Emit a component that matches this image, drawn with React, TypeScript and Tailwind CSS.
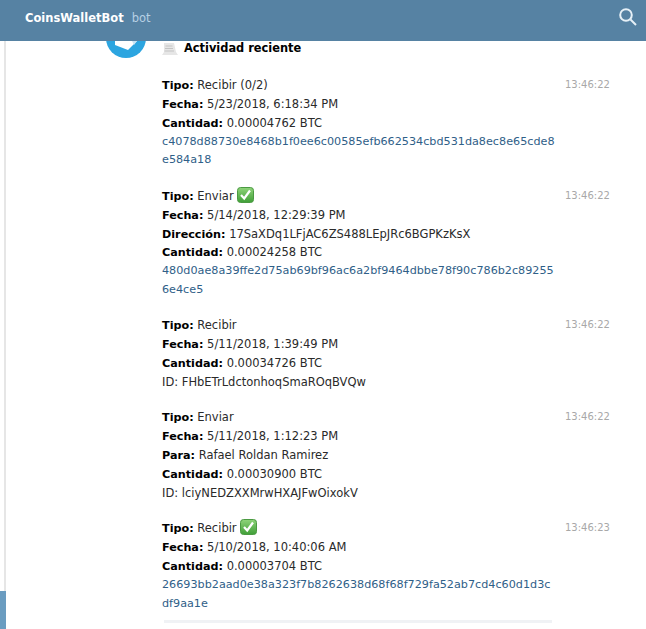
import React from "react";

const font = { fontFamily: '"DejaVu Sans", sans-serif' };

function Check() {
  return (
    <svg width="17" height="16" viewBox="0 0 17 16" className="ml-[3px] inline-block align-[-3px]">
      <defs>
        <linearGradient id="g" x1="0" y1="0" x2="0" y2="1">
          <stop offset="0" stopColor="#8fd47a" />
          <stop offset="1" stopColor="#3f9e37" />
        </linearGradient>
      </defs>
      <rect x="0.5" y="0.5" width="16" height="15" rx="3" fill="url(#g)" stroke="#4b9a42" />
      <path d="M4 8 L7.2 11.5 L13 3.5" stroke="#fff" strokeWidth="2.2" fill="none" />
    </svg>
  );
}

function Msg({ time, lines, link, id, check }: { time: string; lines: [string, string][]; link?: string; id?: string; check?: boolean }) {
  return (
    <div className="flex">
      <div className="w-[394px] text-[11.5px] leading-[18.85px] text-[#2a2a2a]">
        {lines.map(([k, v], i) => (
          <div key={k} className="h-[18.85px]">
            <b className="text-[11.2px] leading-none font-bold text-black">{k}:</b> {v}
            {i === 0 && check ? <Check /> : null}
          </div>
        ))}
        {id ? <div>ID: {id}</div> : null}
        {link ? <div className="break-all text-[11.2px] text-[#2f6088]">{link}</div> : null}
      </div>
      <div className="ml-[9px] text-[10px] leading-[18px] text-[#a8a8a8]">{time}</div>
    </div>
  );
}

export default function App() {
  return (
    <div className="relative h-[629px] w-[646px] overflow-hidden bg-white" style={font}>
      <header className="relative z-10 flex h-[41px] items-center justify-between bg-[#5682a3] pl-[25px] pr-[9px]">
        <div className="mb-[4px] text-[11.5px]">
          <span className="font-bold text-white">CoinsWalletBot</span>
          <span className="ml-[8px] text-[#b7d0e4]">bot</span>
        </div>
        <svg width="18" height="18" viewBox="0 0 18 18" fill="none" stroke="#e6f0f7" strokeWidth="2" className="mb-[7px]">
          <circle cx="7" cy="7" r="5.8" />
          <path d="M11.5 11.5l5.5 5.5" />
        </svg>
      </header>
      <div className="flex h-[588px]">
        <div className="ml-[4px] flex w-[2px] flex-col bg-[#e6e6e6]" />
        <div className="-mt-[23px] ml-[100px] h-[40px] w-[40px] overflow-hidden rounded-full bg-[#2ca5e0]">
          <svg width="40" height="40" viewBox="0 0 40 40">
            <path d="M9 23v4l13 5 9-9z" fill="#fff" />
            <path d="M26 23h5l-3 4z" fill="#c9e3f3" />
          </svg>
        </div>
        <main className="ml-[16px] flex flex-col pt-[1px]">
          <div className="flex h-[14px] items-center text-[11.4px] font-bold text-black">
            <svg width="16" height="12" viewBox="0 0 16 12" className="mr-[6px]">
              <path d="M2 0h10l2 9 2 3H0l2-3z" fill="#e6e6e6" />
              <path d="M3.5 3h7M3 5.5h8M2.5 8h9.5" stroke="#c4c4c4" strokeWidth="1" />
            </svg>
            Actividad reciente
          </div>
          <div className="mt-[20px] flex flex-col gap-[16.6px]">
            <Msg time="13:46:22" lines={[["Tipo", "Recibir (0/2)"], ["Fecha", "5/23/2018, 6:18:34 PM"], ["Cantidad", "0.00004762 BTC"]]} link="c4078d88730e8468b1f0ee6c00585efb662534cbd531da8ec8e65cde8e584a18" />
            <Msg time="13:46:22" check lines={[["Tipo", "Enviar"], ["Fecha", "5/14/2018, 12:29:39 PM"], ["Dirección", "17SaXDq1LFjAC6ZS488LEpJRc6BGPKzKsX"], ["Cantidad", "0.00024258 BTC"]]} link="480d0ae8a39ffe2d75ab69bf96ac6a2bf9464dbbe78f90c786b2c892556e4ce5" />
            <Msg time="13:46:22" lines={[["Tipo", "Recibir"], ["Fecha", "5/11/2018, 1:39:49 PM"], ["Cantidad", "0.00034726 BTC"]]} id="FHbETrLdctonhoqSmaROqBVQw" />
            <Msg time="13:46:22" lines={[["Tipo", "Enviar"], ["Fecha", "5/11/2018, 1:12:23 PM"], ["Para", "Rafael Roldan Ramirez"], ["Cantidad", "0.00030900 BTC"]]} id="lciyNEDZXXMrwHXAJFwOixokV" />
            <Msg time="13:46:23" check lines={[["Tipo", "Recibir"], ["Fecha", "5/10/2018, 10:40:06 AM"], ["Cantidad", "0.00003704 BTC"]]} link="26693bb2aad0e38a323f7b8262638d68f68f729fa52ab7cd4c60d1d3cdf9aa1e" />
          </div>
          <div className="mt-[7px] ml-[2px] h-[3px] w-[388px] bg-[#f0f2f5]" />
        </main>
      </div>
      <div className="absolute bottom-0 left-0 h-[38px] w-[6px] bg-[#6a9cc0]" />
    </div>
  );
}
